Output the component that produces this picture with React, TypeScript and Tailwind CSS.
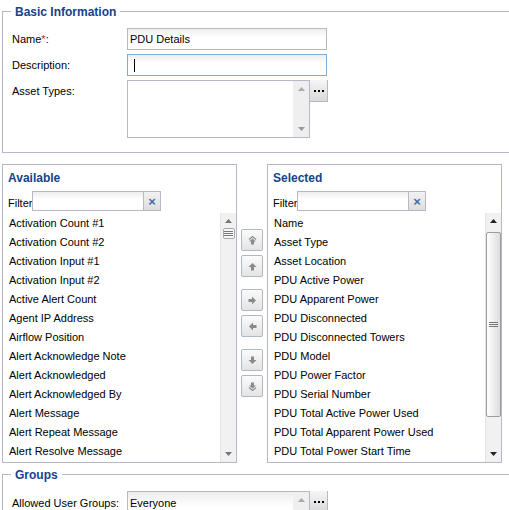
import React from "react";

const available = [
  "Activation Count #1",
  "Activation Count #2",
  "Activation Input #1",
  "Activation Input #2",
  "Active Alert Count",
  "Agent IP Address",
  "Airflow Position",
  "Alert Acknowledge Note",
  "Alert Acknowledged",
  "Alert Acknowledged By",
  "Alert Message",
  "Alert Repeat Message",
  "Alert Resolve Message",
];

const selected = [
  "Name",
  "Asset Type",
  "Asset Location",
  "PDU Active Power",
  "PDU Apparent Power",
  "PDU Disconnected",
  "PDU Disconnected Towers",
  "PDU Model",
  "PDU Power Factor",
  "PDU Serial Number",
  "PDU Total Active Power Used",
  "PDU Total Apparent Power Used",
  "PDU Total Power Start Time",
];

const inputBg = "bg-[linear-gradient(180deg,#ededed,#ffffff_40%)]";

function Tri({ down = false, color = "#666" }: { down?: boolean; color?: string }) {
  return (
    <svg width="7" height="4" viewBox="0 0 7 4" className={down ? "rotate-180" : ""}>
      <path d="M0 4 L3.5 0 L7 4Z" fill={color} />
    </svg>
  );
}

function Grip() {
  return (
    <svg width="9" height="6" viewBox="0 0 9 6">
      <path d="M0 0.5H9M0 2.5H9M0 4.5H9" stroke="#777" strokeWidth="1" />
    </svg>
  );
}

function Fieldset({ title, className, children }: { title: string; className: string; children?: React.ReactNode }) {
  return (
    <div className={`relative ml-[2px] w-[530px] border border-[#b5b8c8] ${className}`}>
      <span className="absolute left-[8px] top-[-7px] bg-white px-[4px] text-[12px] font-bold leading-[14px] text-[#15428b]">
        {title}
      </span>
      {children}
    </div>
  );
}

function DotsButton() {
  return (
    <div className="flex h-[22px] w-[18px] items-end justify-center gap-[2px] border-r border-b border-[#b5b8c8] bg-[linear-gradient(180deg,#f6f6f6,#d9d9d9)] pb-[9px]">
      <div className="h-[2px] w-[2px] bg-black" />
      <div className="h-[2px] w-[2px] bg-black" />
      <div className="h-[2px] w-[2px] bg-black" />
    </div>
  );
}

function ArrowIcon({ kind }: { kind: "top" | "up" | "right" | "left" | "down" | "bottom" }) {
  const rot =
    kind === "right" ? "rotate-90" : kind === "left" ? "-rotate-90" : kind === "down" || kind === "bottom" ? "rotate-180" : "";
  const double = kind === "top" || kind === "bottom";
  return (
    <svg width="9" height="9" viewBox="0 0 9 9" className={rot}>
      {double ? (
        <>
          <path d="M1 3.5 L4.5 0.5 L8 3.5" fill="none" stroke="#8a8a8a" strokeWidth="1.2" />
          <path d="M4.5 2.5 L8 5.5 L6 5.5 L6 8.5 L3 8.5 L3 5.5 L1 5.5Z" fill="#8a8a8a" />
        </>
      ) : (
        <path d="M4.5 1 L8.5 5 L6 5 L6 8.5 L3 8.5 L3 5 L0.5 5Z" fill="#8a8a8a" />
      )}
    </svg>
  );
}

function MoveButton({ kind, className = "" }: { kind: "top" | "up" | "right" | "left" | "down" | "bottom"; className?: string }) {
  return (
    <div
      className={`flex h-[22px] w-[22px] items-center justify-center rounded-[2px] border border-[#aeb8c6] bg-[linear-gradient(180deg,#fbfbfb,#e4e4e4)] ${className}`}
    >
      <ArrowIcon kind={kind} />
    </div>
  );
}

function Panel({ title, items, bigThumb }: { title: string; items: string[]; bigThumb?: boolean }) {
  return (
    <div className="flex h-[299px] w-[235px] flex-col border border-[#b5b8c8]">
      <div className="pl-[5px] pt-[6px] text-[12px] font-bold leading-[14px] text-[#15428b]">{title}</div>
      <div className="mt-[6px] flex h-[20px] items-center pl-[5px]">
        <span className="w-[24px] pt-[5px]">Filter</span>
        <div className={`h-[20px] w-[112px] border border-[#b5b8c8] ${inputBg}`} />
        <div className="ml-[-1px] flex h-[20px] w-[18px] items-center justify-center border border-[#b5b8c8] bg-[linear-gradient(180deg,#f2f2f2,#dedede)] text-[13px] font-bold leading-none text-[#3d6ea8]">
          ×
        </div>
      </div>
      <div className="mt-[2px] flex flex-1 overflow-hidden">
        <div className="flex-1 pl-[6px] pt-[1px]">
          {items.map((t) => (
            <div key={t} className="h-[19px] whitespace-nowrap leading-[19px]">
              {t}
            </div>
          ))}
        </div>
        <div className="flex w-[16px] flex-col items-center border-l border-[#e4e4e4] bg-[#f1f1f1]">
          <div className="flex h-[16px] items-center justify-center">
            <Tri color={bigThumb ? "#222" : "#777"} />
          </div>
          {bigThumb ? (
            <div className="mt-[3px] flex h-[185px] w-[15px] items-center justify-center rounded-[2px] border border-[#9c9c9c] bg-[linear-gradient(90deg,#ffffff,#dcdcdc)]">
              <Grip />
            </div>
          ) : (
            <div className="mt-[-1px] flex h-[11px] w-[12px] items-center justify-center rounded-[2px] border border-[#a8a8a8] bg-[#f7f7f7]">
              <Grip />
            </div>
          )}
          <div className="flex-1" />
          <div className="flex h-[16px] items-center justify-center">
            <Tri down color={bigThumb ? "#222" : "#777"} />
          </div>
        </div>
      </div>
    </div>
  );
}

export default function App() {
  return (
    <div className="h-[510px] w-[509px] overflow-hidden bg-white pt-[11px] font-['Liberation_Sans',Arial,sans-serif] text-[11px] text-black">
      <Fieldset title="Basic Information" className="h-[142px] pl-[9px] pt-[16px]">
        <div className="flex flex-col gap-[4px]">
          <div className="flex h-[22px] items-center">
            <span className="w-[115px]">
              Name<span className="text-[#e02020]">*</span>:
            </span>
            <div className={`flex h-[22px] w-[200px] items-center border border-[#b5b8c8] px-[2px] ${inputBg}`}>PDU Details</div>
          </div>
          <div className="flex h-[22px] items-center">
            <span className="w-[115px]">Description:</span>
            <div className={`flex h-[22px] w-[200px] items-center border border-[#7eadd9] pl-[6px] ${inputBg}`}>
              <div className="h-[13px] w-px bg-black" />
            </div>
          </div>
          <div className="flex items-start">
            <span className="mt-[3px] w-[115px]">Asset Types:</span>
            <div className="flex h-[58px] w-[183px] border border-[#b5b8c8] bg-white">
              <div className="flex-1" />
              <div className="flex w-[16px] flex-col items-center justify-between bg-[#efefef] py-[6px]">
                <Tri color="#aaa" />
                <Tri down color="#999" />
              </div>
            </div>
            <DotsButton />
          </div>
        </div>
      </Fieldset>

      <div className="ml-[2px] mt-[11px] flex gap-[4px]">
        <Panel title="Available" items={available} />
        <div className="flex flex-col pt-[65px]">
          <MoveButton kind="top" />
          <MoveButton kind="up" className="mt-[4px]" />
          <MoveButton kind="right" className="mt-[12px]" />
          <MoveButton kind="left" className="mt-[4px]" />
          <MoveButton kind="down" className="mt-[12px]" />
          <MoveButton kind="bottom" className="mt-[4px]" />
        </div>
        <Panel title="Selected" items={selected} bigThumb />
      </div>

      <Fieldset title="Groups" className="mt-[11px] h-[60px] pl-[9px] pt-[16px]">
        <div className="flex items-start">
          <span className="mt-[4px] w-[115px]">Allowed User Groups:</span>
          <div className={`flex h-[40px] w-[183px] border border-[#b5b8c8] ${inputBg}`}>
            <div className="flex-1 pl-[2px] pt-[3px]">Everyone</div>
            <div className="flex w-[16px] flex-col items-center bg-[#efefef] pt-[6px]">
              <Tri color="#aaa" />
            </div>
          </div>
          <DotsButton />
        </div>
      </Fieldset>
    </div>
  );
}
